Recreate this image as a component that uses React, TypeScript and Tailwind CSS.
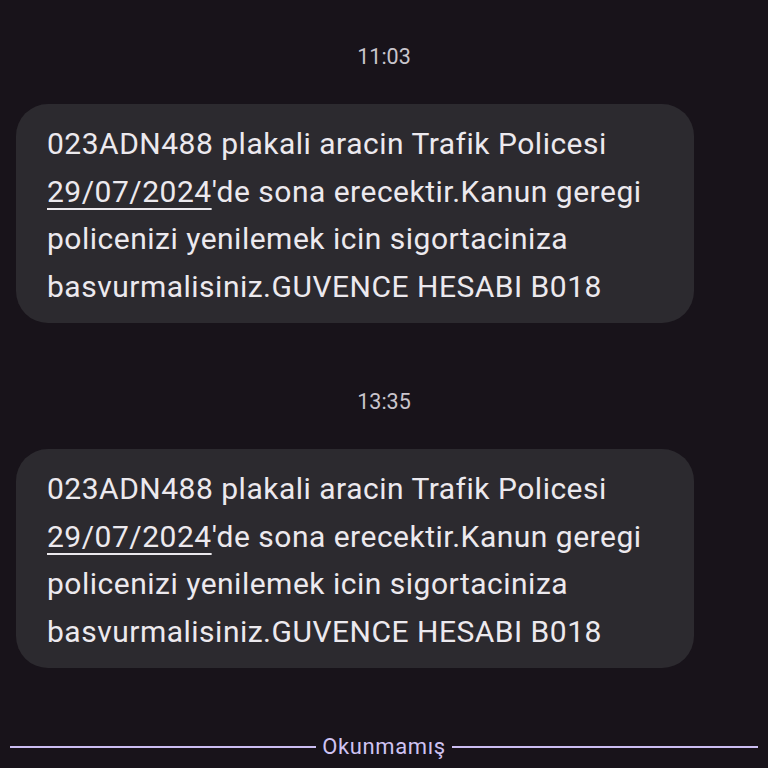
const message = {
	plate: "023ADN488 plakali aracin Trafik Policesi",
	date: "29/07/2024",
	rest: "'de sona erecektir.Kanun geregi policenizi yenilemek icin sigortaciniza basvurmalisiniz.GUVENCE HESABI B018",
};

function Bubble() {
	return (
		<div className="ml-4 w-[678px] rounded-[32px] bg-[#2c2a2f] pl-[31px] pr-6 pt-[16px] pb-[13px] text-[30px] leading-[47.5px] text-[#ece9ee] tracking-[0.5px]">
			{message.plate}{" "}
			<span className="underline decoration-[2px] underline-offset-[6px]">{message.date}</span>
			{message.rest}
		</div>
	);
}

function Timestamp({ time }: { time: string }) {
	return <div className="text-center text-[21.5px] leading-6 text-[#c9c5cc]">{time}</div>;
}

export default function App() {
	return (
		<div className="h-[768px] w-[768px] overflow-hidden bg-[#18131a] font-['Roboto',sans-serif]">
			<div className="pt-[45px]">
				<Timestamp time="11:03" />
			</div>
			<div className="mt-[35px]">
				<Bubble />
			</div>
			<div className="mt-[67px]">
				<Timestamp time="13:35" />
			</div>
			<div className="mt-[35px]">
				<Bubble />
			</div>

			{/* unread divider */}
			<div className="mt-[67px] flex items-center gap-[6px] px-[10px]">
				<div className="h-[2px] flex-1 bg-[#cbbdf2]" />
				<span className="text-[22px] leading-6 tracking-[0.6px] text-[#cfc3f3]">Okunmamış</span>
				<div className="h-[2px] flex-1 bg-[#cbbdf2]" />
			</div>
		</div>
	);
}
